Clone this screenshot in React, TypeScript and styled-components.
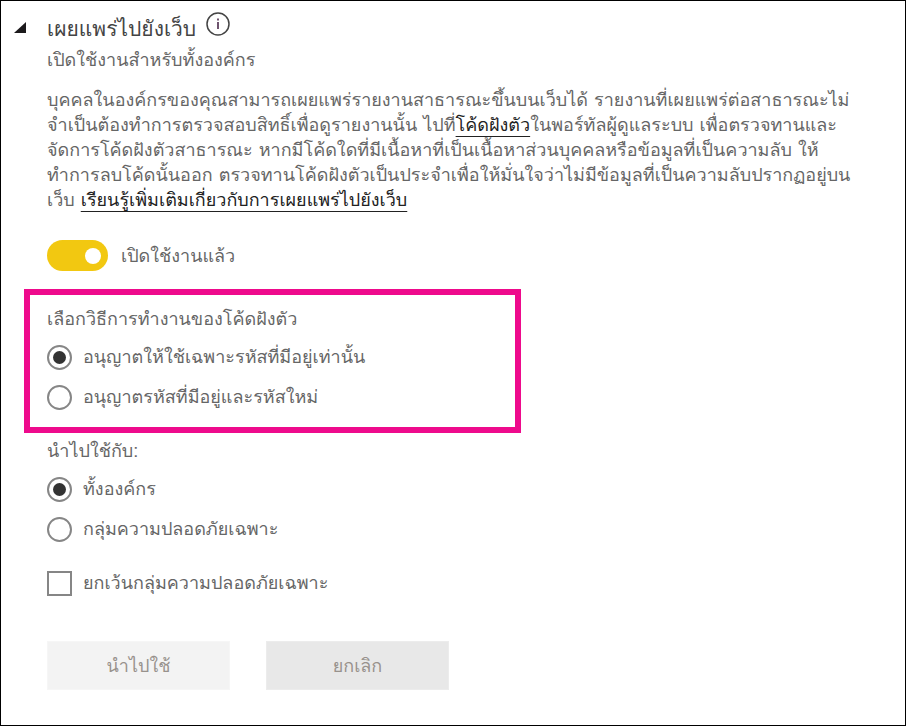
import React from "react";
import styled, { createGlobalStyle } from "styled-components";

const GlobalStyle = createGlobalStyle`
  *, *::before, *::after { box-sizing: border-box; }
  body {
    margin: 0;
    background: #fff;
    color: #666;
    font-family: "Leelawadee UI", "Loma", "DejaVu Sans", sans-serif;
    font-size: 18px;
    line-height: 24px;
  }
  button, input { font: inherit; margin: 0; }
`;

const Page = styled.main`
  min-height: 100vh;
  padding: 10px 23px 32px;
  border: 1px solid #000;
`;

const Indented = styled.div`
  padding-left: 23px;
`;

const Header = styled.header`
  display: grid;
  grid-template-columns: 33px auto;
  margin-left: -10px;
`;

const Disclosure = styled.button`
  align-self: start;
  display: flex;
  width: 14px;
  height: 28px;
  padding: 11px 0 0;
  border: 0;
  background: none;
`;

const TitleRow = styled.div`
  display: flex;
  gap: 9px;
`;

const Title = styled.h1`
  margin: 0;
  padding-top: 4px;
  color: #444;
  font-size: 21px;
  font-weight: 400;
  line-height: 28px;
`;

const InfoButton = styled.button`
  display: flex;
  align-self: flex-start;
  padding: 0;
  border: 0;
  background: none;
`;

const Subtitle = styled.p`
  margin: 5px 0 0;
`;

const Description = styled.p`
  margin: 15px 0 0;
  line-height: 25px;
  white-space: nowrap;
`;

const Link = styled.a`
  color: #222;
  text-decoration: underline 1px;
  text-underline-offset: 5px;
  text-decoration-skip-ink: none;
`;

const SwitchRow = styled.label`
  display: flex;
  align-items: center;
  gap: 13px;
  width: max-content;
  margin-top: 28px;
`;

const Switch = styled.input`
  appearance: none;
  display: flex;
  align-items: center;
  justify-content: flex-end;
  width: 61px;
  height: 31px;
  padding-right: 7px;
  border-radius: 16px;
  background: #b3b0ad;
  &:checked { background: #f2c811; }
  &::after {
    content: "";
    width: 16px;
    height: 16px;
    border-radius: 50%;
    background: #fff;
  }
`;

const Highlight = styled.div`
  width: 100%;
  max-width: 497px;
  margin: 18px 0 6px;
  padding: 12px 17px 17px;
  border: 6px solid #ee0a8c;
`;

const Group = styled.fieldset`
  min-width: 0;
  margin: 0;
  padding: 0;
  border: 0;
`;

const Legend = styled.legend`
  padding: 0;
  margin-bottom: 13px;
`;

const Options = styled.div`
  display: grid;
  gap: 14px;
`;

const Option = styled.label`
  display: flex;
  align-items: center;
  gap: 11px;
  width: max-content;
  height: 26px;
`;

const Radio = styled.input`
  appearance: none;
  display: grid;
  place-items: center;
  width: 25px;
  height: 25px;
  border: 2px solid #868686;
  border-radius: 50%;
  &:checked::after {
    content: "";
    width: 13px;
    height: 13px;
    border-radius: 50%;
    background: #333;
  }
`;

const Checkbox = styled.input`
  appearance: none;
  width: 25px;
  height: 25px;
  border: 2px solid #868686;
`;

const Exclusion = styled.div`
  margin-top: 28px;
`;

const Actions = styled.div`
  display: flex;
  gap: 36px;
  margin-top: 45px;
`;

const Action = styled.button<{ $muted?: boolean }>`
  width: 183px;
  height: 49px;
  padding: 0;
  border: 1px solid ${(p) => (p.$muted ? "#f6f6f6" : "#ececec")};
  background: ${(p) => (p.$muted ? "#f3f3f3" : "#e8e8e8")};
  color: #98928d;
`;

function Choices({ name, legend, options }: { name: string; legend: string; options: string[] }) {
  return (
    <Group>
      <Legend>{legend}</Legend>
      <Options>
        {options.map((text, i) => (
          <Option key={text}>
            <Radio type="radio" name={name} defaultChecked={i === 0} />
            {text}
          </Option>
        ))}
      </Options>
    </Group>
  );
}

export default function App() {
  return (
    <Page>
      <GlobalStyle />
      <Header>
        <Disclosure type="button" aria-expanded="true" aria-labelledby="setting-title">
          <svg width="12" height="12" viewBox="0 0 12 12" aria-hidden="true">
            <path d="M0 11 12 0V11Z" fill="#1c1a1c" />
          </svg>
        </Disclosure>
        <div>
          <TitleRow>
            <Title id="setting-title">เผยแพร่ไปยังเว็บ</Title>
            <InfoButton type="button" aria-describedby="setting-title">
              <svg width="26" height="26" viewBox="0 0 26 26" aria-hidden="true">
                <circle cx="13" cy="13" r="11" fill="none" stroke="#444" strokeWidth="1.5" />
                <path d="M13 11v7M13 7.5v2" stroke="#4a2a4a" strokeWidth="1.6" />
              </svg>
            </InfoButton>
          </TitleRow>
          <Subtitle>เปิดใช้งานสำหรับทั้งองค์กร</Subtitle>
        </div>
      </Header>
      <Indented>
        <Description>
          บุคคลในองค์กรของคุณสามารถเผยแพร่รายงานสาธารณะขึ้นบนเว็บได้ รายงานที่เผยแพร่ต่อสาธารณะไม่
          <br />
          จำเป็นต้องทำการตรวจสอบสิทธิ์เพื่อดูรายงานนั้น ไปที่<Link href="#embed-codes">โค้ดฝังตัว</Link>ในพอร์ทัลผู้ดูแลระบบ เพื่อตรวจทานและ
          <br />
          จัดการโค้ดฝังตัวสาธารณะ หากมีโค้ดใดที่มีเนื้อหาที่เป็นเนื้อหาส่วนบุคคลหรือข้อมูลที่เป็นความลับ ให้
          <br />
          ทำการลบโค้ดนั้นออก ตรวจทานโค้ดฝังตัวเป็นประจำเพื่อให้มั่นใจว่าไม่มีข้อมูลที่เป็นความลับปรากฏอยู่บน
          <br />
          เว็บ <Link href="#learn-more">เรียนรู้เพิ่มเติมเกี่ยวกับการเผยแพร่ไปยังเว็บ</Link>
        </Description>
        <SwitchRow>
          <Switch type="checkbox" role="switch" defaultChecked />
          เปิดใช้งานแล้ว
        </SwitchRow>
      </Indented>
      <Highlight>
        <Choices
          name="embed-mode"
          legend="เลือกวิธีการทำงานของโค้ดฝังตัว"
          options={["อนุญาตให้ใช้เฉพาะรหัสที่มีอยู่เท่านั้น", "อนุญาตรหัสที่มีอยู่และรหัสใหม่"]}
        />
      </Highlight>
      <Indented>
        <Choices name="scope" legend="นำไปใช้กับ:" options={["ทั้งองค์กร", "กลุ่มความปลอดภัยเฉพาะ"]} />
        <Exclusion>
          <Option>
            <Checkbox type="checkbox" />
            ยกเว้นกลุ่มความปลอดภัยเฉพาะ
          </Option>
        </Exclusion>
        <Actions>
          <Action type="button" $muted>นำไปใช้</Action>
          <Action type="button">ยกเลิก</Action>
        </Actions>
      </Indented>
    </Page>
  );
}
